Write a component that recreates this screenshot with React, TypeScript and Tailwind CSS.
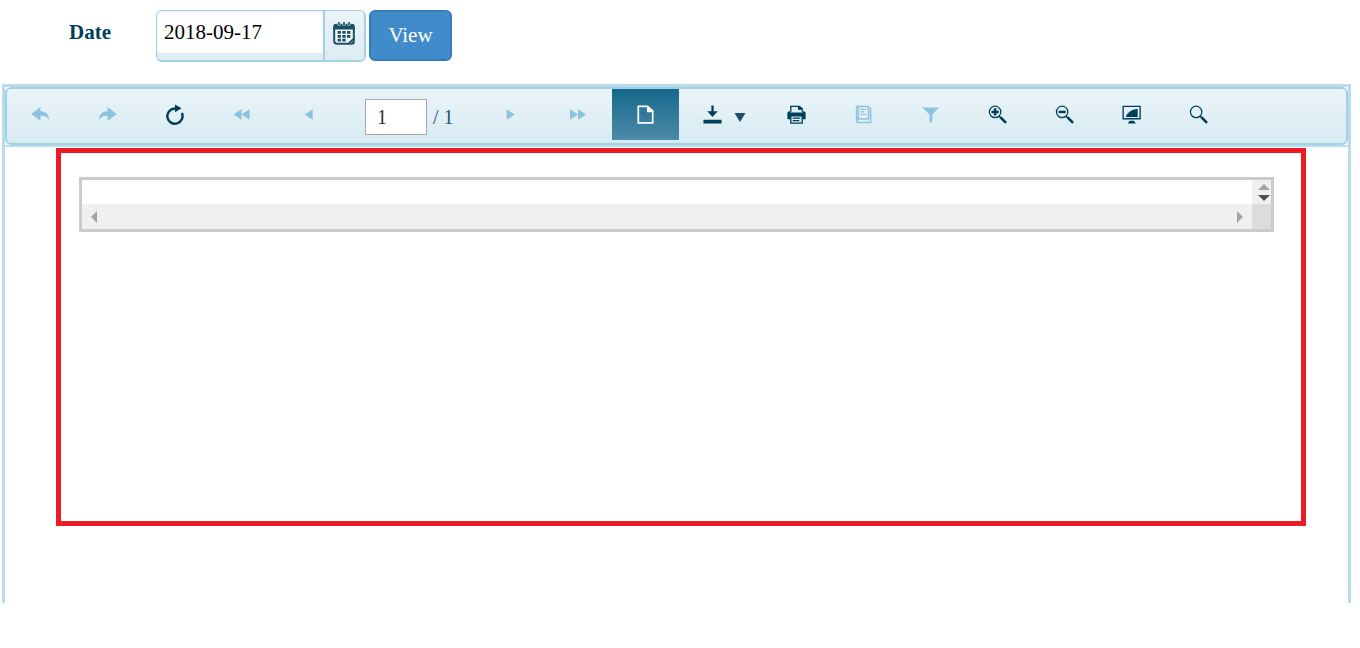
import { useState } from "react";
import type { ReactNode } from "react";

type ToolButtonProps = {
    label: string;
    disabled?: boolean;
    children: ReactNode;
};

const ToolButton = ({ label, disabled, children }: ToolButtonProps) => (
    <button
        type="button"
        aria-label={label}
        disabled={disabled}
        className="flex h-[51px] w-[67px] shrink-0 items-center justify-center text-[#003f59] disabled:text-[#8dc3dd]"
    >
        {children}
    </button>
);

const Icon = ({ children }: { children: ReactNode }) => (
    <svg viewBox="0 0 20 20" className="size-[19px]" fill="currentColor" aria-hidden="true">
        {children}
    </svg>
);

const Magnifier = ({ children }: { children?: ReactNode }) => (
    <Icon>
        <circle cx="7.5" cy="7.3" r="6" fill="none" stroke="currentColor" strokeWidth="1.3" />
        <path d="M11.5 11.5 18 18" stroke="currentColor" strokeWidth="1.6" />
        <path d="M13.8 13.6 18.2 18" stroke="currentColor" strokeWidth="2.8" strokeLinecap="round" />
        {children}
    </Icon>
);

const DateFilter = () => {
    const [date, setDate] = useState("2018-09-17");

    return (
        <form className="flex items-start pt-[10px] pl-[69px]" onSubmit={(e) => e.preventDefault()}>
            <label htmlFor="date" className="w-[87px] pt-2 text-[21px] leading-7 font-bold text-[#003f59]">
                Date
            </label>
            <div className="flex h-[52px] w-[210px] overflow-hidden rounded-md border-t border-r-2 border-b-2 border-l border-[#a3d0e4] bg-[#dfeef5]">
                <input
                    id="date"
                    type="text"
                    value={date}
                    onChange={(e) => setDate(e.target.value)}
                    className="h-[42px] min-w-0 flex-1 rounded-bl-sm bg-white px-[7px] text-[21px] text-black shadow-[inset_0_1px_2px_rgba(0,0,0,0.08)] outline-none"
                />
                <button
                    type="button"
                    aria-label="Choose date"
                    className="flex w-[41px] justify-center border-l-2 border-[#a3d0e4] bg-linear-to-b from-[#ebf4f9] to-[#dcecf3] pt-[11px] pr-[2px] text-[#1b5068]"
                >
                    <svg viewBox="0 0 22 23" className="h-[23px] w-[22px]" fill="currentColor" aria-hidden="true">
                        <path d="M1.2 5.5V19a2.8 2.8 0 0 0 2.8 2.8h11.5l5.3-5V5.5" fill="#f2f8fb" stroke="currentColor" strokeWidth="2" />
                        <path d="M3 1.8h16a3 3 0 0 1 2.8 3v2.7H.2V4.8A3 3 0 0 1 3 1.800Z" />
                        <path d="M21.8 15.5V20a2.8 2.8 0 0 1-2.8 2.8h-4.5c3.2-.6 6-3 7.3-7.3Z" />
                        <path d="M6 0v3.600M11 0v3.600M16 0v3.600" stroke="#e6f1f7" strokeWidth="3" />
                        <path d="M6 0v3.200M11 0v3.200M16 0v3.200" stroke="currentColor" strokeWidth="1.600" />
                        <path d="M9.300 9h3.400v2.800H9.300ZM14 9h3.400v2.800H14ZM4.600 9H8v2.800H4.600ZM4.600 12.900H8v2.800H4.600ZM9.300 12.900h3.400v2.800H9.300ZM14 12.900h3.400v2.800H14ZM4.600 16.800H8v2.800H4.600ZM9.300 16.800h3.400v2.800H9.300Z" />
                    </svg>
                </button>
            </div>
            <button
                type="submit"
                className="ml-[3px] h-[51px] w-[83px] rounded-md border-2 border-[#357ebd] bg-[#428bca] text-[21px] text-white"
            >
                View
            </button>
        </form>
    );
};

const Toolbar = () => {
    const [page, setPage] = useState("1");

    return (
        <div role="toolbar" className="flex h-[58px] items-start rounded-md border-2 border-[#a3d0e4] bg-linear-to-b from-[#eaf4f9] to-[#d8ebf3]">
            <ToolButton label="Back" disabled>
                <Icon>
                    <path d="M10 2v4.5c5.5 0 8.8 3.5 9.300 9.200-2.500-3.400-5-4.500-9.300-4.500v5.300L.2 9.500Z" />
                </Icon>
            </ToolButton>
            <ToolButton label="Forward" disabled>
                <Icon>
                    <path d="M10 2v4.5C4.500 6.500 1.200 10 .7 15.700c2.500-3.400 5-4.500 9.300-4.500v5.300l9.800-7Z" />
                </Icon>
            </ToolButton>
            <ToolButton label="Refresh">
                <svg viewBox="0 0 20 22" className="h-[22px] w-[19px]" fill="currentColor" aria-hidden="true">
                    <path d="M13 4.200H10A8 8 0 1 0 17.800 9" fill="none" stroke="currentColor" strokeWidth="2.600" />
                    <path d="M10.500 0 17.500 4 10.500 8Z" />
                </svg>
            </ToolButton>
            <ToolButton label="First page" disabled>
                <Icon>
                    <path d="M10 4.500v11L1.500 10ZM18.500 4.500v11L10 10Z" />
                </Icon>
            </ToolButton>
            <ToolButton label="Previous page" disabled>
                <Icon>
                    <path d="M14.500 4.500v11L6 10Z" />
                </Icon>
            </ToolButton>
            <div className="flex w-[136px] shrink-0 items-center pt-[10px] pl-[23px] text-[20px] text-[#1f5a75]">
                <input
                    type="text"
                    aria-label="Page number"
                    value={page}
                    onChange={(e) => setPage(e.target.value)}
                    className="h-9 w-[62px] border border-[#a9a9a9] bg-white px-[11px] text-[20px] text-[#333333] outline-none"
                />
                <span className="pl-[6px]">/ 1</span>
            </div>
            <ToolButton label="Next page" disabled>
                <Icon>
                    <path d="M5 4.500v11l8.500-5.500Z" />
                </Icon>
            </ToolButton>
            <ToolButton label="Last page" disabled>
                <Icon>
                    <path d="M1 4.500v11L9.500 10ZM9.500 4.500v11L18 10Z" />
                </Icon>
            </ToolButton>
            <button
                type="button"
                aria-label="Print preview"
                aria-pressed="true"
                className="flex h-[51px] w-[67px] shrink-0 items-center justify-center bg-linear-to-b from-[#14688d] to-[#4a8ba6] text-white"
            >
                <Icon>
                    <path d="M2.400 1.500H12l5.600 5v12.300H2.400Z" fill="none" stroke="currentColor" strokeWidth="1.800" />
                    <path d="M11.500 1h1.500l5.300 5v1.500h-6.800Z" />
                </Icon>
            </button>
            <button
                type="button"
                aria-label="Export"
                className="flex h-[51px] w-[84px] shrink-0 items-center justify-center gap-3 pl-[6px] text-[#003f59]"
            >
                <Icon>
                    <path d="M.5 15.500h19v4H.5ZM8.800 .5h2.400v6H15.500L10 12.500 4.500 6.500h4.300Z" />
                </Icon>
                <svg viewBox="0 0 12 14" className="h-[14px] w-3" fill="#1b5068" aria-hidden="true">
                    <path d="M.5 5h11L6 14Z" />
                </svg>
            </button>
            <ToolButton label="Print">
                <Icon>
                    <path d="M4 7V1.500h9L16 4v3" fill="none" stroke="currentColor" strokeWidth="1.400" />
                    <path d="M11.500 1h1.800l3 3v1h-4.800Z" />
                    <path d="M2 6.500h1.500V8h13V6.500H18L19.600 8v7H16v-3H4v3H.4V8Z" />
                    <path d="M4 11.500v7.500h12v-7.500" fill="none" stroke="currentColor" strokeWidth="1.400" />
                    <path d="M6 13.700h8M6 16.400h7" stroke="currentColor" strokeWidth="1.300" />
                </Icon>
            </ToolButton>
            <ToolButton label="Page setup" disabled>
                <Icon>
                    <path d="M2.800 1.500h12.400v13.200H4.500A1.700 1.700 0 0 0 2.800 16.400Z" fill="none" stroke="currentColor" strokeWidth="1.600" />
                    <path d="M2.800 2v14.500c0 1.300.8 2 2 2h12.700V3.500H16" fill="none" stroke="currentColor" strokeWidth="1.600" />
                    <path d="M4.800 2v12.500" stroke="currentColor" strokeWidth="1" />
                    <path d="M6.500 4.500h6.500M6.500 7.300h4.500M6.500 10h6.500" stroke="currentColor" strokeWidth="1.300" />
                </Icon>
            </ToolButton>
            <ToolButton label="Filter" disabled>
                <Icon>
                    <path d="M1.200 2.500h17.600L12 10v6.500L9 19.500V10Z" />
                </Icon>
            </ToolButton>
            <ToolButton label="Zoom in">
                <Magnifier>
                    <path d="M3.700 7.300h7.600M7.500 3.500v7.600" stroke="currentColor" strokeWidth="2.600" />
                </Magnifier>
            </ToolButton>
            <ToolButton label="Zoom out">
                <Magnifier>
                    <path d="M3.700 7.300h7.600" stroke="currentColor" strokeWidth="2.600" />
                </Magnifier>
            </ToolButton>
            <ToolButton label="Full screen">
                <Icon>
                    <path d="M1.200 1.500h17.900v13H1.200Z" fill="none" stroke="currentColor" strokeWidth="1.400" />
                    <path d="M4 12.500c1.500-4.500 6-7.500 12.500-8.500v8.500Z" />
                    <path d="M8 16.500h4.500l2.200 3H6Z" />
                </Icon>
            </ToolButton>
            <ToolButton label="Search">
                <Magnifier />
            </ToolButton>
        </div>
    );
};

const ScrollFrame = () => (
    <div className="grid grid-cols-[1fr_19px] grid-rows-[24px_25px] border-[3px] border-[#cbcbcb]">
        <div className="bg-white" />
        <div className="flex flex-col items-end justify-center gap-[5px] bg-[#f0f0f0] pr-px">
            <button type="button" aria-label="Scroll up" className="text-[#a3a3a3]">
                <svg viewBox="0 0 12 6" className="block h-[6px] w-3" fill="currentColor">
                    <path d="M0 6 6 0l6 6Z" />
                </svg>
            </button>
            <button type="button" aria-label="Scroll down" className="text-[#505050]">
                <svg viewBox="0 0 12 6" className="block h-[6px] w-3" fill="currentColor">
                    <path d="M0 0h12L6 6Z" />
                </svg>
            </button>
        </div>
        <div className="flex items-center justify-between bg-[#f0f0f0] px-[9px] text-[#a3a3a3]">
            <button type="button" aria-label="Scroll left">
                <svg viewBox="0 0 6 12" className="block h-3 w-[6px]" fill="currentColor">
                    <path d="M6 0v12L0 6Z" />
                </svg>
            </button>
            <button type="button" aria-label="Scroll right">
                <svg viewBox="0 0 6 12" className="block h-3 w-[6px]" fill="currentColor">
                    <path d="M0 0v12l6-6Z" />
                </svg>
            </button>
        </div>
        <div className="bg-[#dcdcdc]" />
    </div>
);

const App = () => {
    return (
        <main className="bg-white font-['Liberation_Serif',serif]">
            <DateFilter />
            <section className="mt-[22px] mr-[9px] ml-[2px] border-x-[3px] border-t-[3px] border-[#b8dcea] pb-[77px]">
                <div className="border-b-2 border-[#b8dcea]">
                    <Toolbar />
                </div>
                <div className="mt-px mr-[42px] ml-[51px] min-h-[378px] border-[5px] border-[#ed1c24] pt-6 pr-[27px] pl-[18px]">
                    <ScrollFrame />
                </div>
            </section>
        </main>
    );
};

export default App;
